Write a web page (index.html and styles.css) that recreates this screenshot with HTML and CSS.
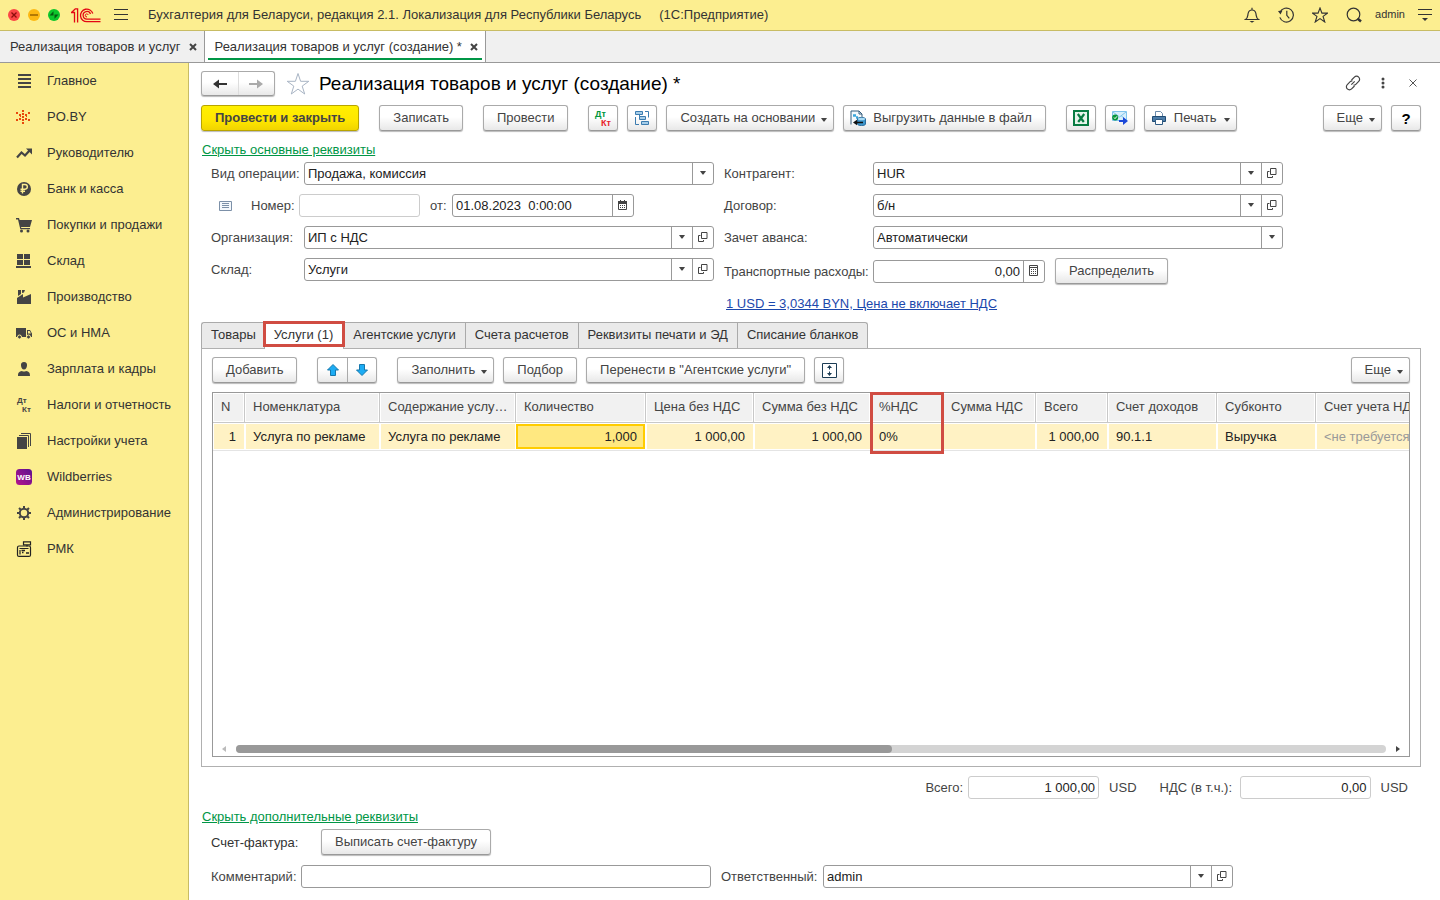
FILE: index.html
```html
<!DOCTYPE html>
<html lang="ru">
<head>
<meta charset="utf-8">
<meta name="viewport" content="width=device-width, initial-scale=1">
<title>Реализация товаров и услуг (создание)</title>
<link rel="stylesheet" href="styles.css">
</head>
<body>
<svg class="sprite" aria-hidden="true">
  <symbol id="caret" viewBox="0 0 6 4"><path d="M0 0h6L3.500 3.500h-1z" fill="#444"/></symbol>
  <symbol id="open" viewBox="0 0 10 10"><path d="M3.500.5h5.500v6h-5.500zM2.500 3.500h-2v6h5v-1.500" fill="none" stroke="#444"/></symbol>
  <symbol id="cross" viewBox="0 0 8 8"><path d="M1 1l6 6M7 1l-6 6" stroke="#444" stroke-width="2"/></symbol>
  <symbol id="star" viewBox="0 0 24 24"><path d="M12 1.500l2.600 7.800h8.200l-6.600 4.800 2.500 7.900-6.700-4.900L5.300 22l2.500-7.900-6.600-4.800h8.200z" fill="none" stroke="currentColor"/></symbol>
</svg>

<header class="titlebar">
  <div class="lights">
    <svg width="12" height="12" viewBox="0 0 12 12"><circle cx="6" cy="6" r="6" fill="#fb4646"/><path d="M3.500 3.500l5 5M8.500 3.500l-5 5" stroke="#8c0d0d" stroke-width="1.300"/></svg>
    <svg width="12" height="12" viewBox="0 0 12 12"><circle cx="6" cy="6" r="6" fill="#fdb813"/><path d="M2 6h8" stroke="#9a6400" stroke-width="1.500"/></svg>
    <svg width="12" height="12" viewBox="0 0 12 12"><circle cx="6" cy="6" r="6" fill="#0cc62c"/><path d="M5.500 2.200v4.300h-4zM6.500 9.800V5.500h4z" fill="#045a10"/></svg>
  </div>
  <svg class="logo" width="30" height="15" viewBox="0 0 30 15" fill="none" stroke="#e30613" stroke-width="1.300"><path d="M0 4.500h3.500V14.500M.8 4.300L4.300.900H6.600V14.500"/><path d="M21.800 5.500A6.300 6.300 0 1 0 16 13.700H29.500"/><path d="M19.500 6A3.800 3.800 0 1 0 16 11.100H29.500"/><path d="M17.200 6.900A1.500 1.500 0 1 0 16 8.900" stroke-width="1"/></svg>
  <button class="plain burger" aria-label="Главное меню"><svg width="14" height="12" viewBox="0 0 14 12"><path d="M0 .5h14M0 5.500h14M0 10.500h14" stroke="#333"/></svg></button>
  <div class="app-name"><span>Бухгалтерия для Беларуси, редакция 2.1. Локализация для Республики Беларусь</span><span>(1С:Предприятие)</span></div>
  <div class="services">
    <button class="plain" aria-label="Уведомления"><svg width="16" height="16" viewBox="0 0 16 16" fill="none" stroke="#333" stroke-width="1.200"><path d="M1.500 12.500c2.500-1.500 2-3 2.600-6C4.600 4 6 3 8 3s3.400 1 3.900 3.500c.6 3 .1 4.500 2.600 6zM8 3V.8"/><path d="M5.500 14h5L8 15.800z" fill="#333" stroke="none"/></svg></button>
    <button class="plain" aria-label="История"><svg width="16" height="16" viewBox="0 0 16 16" fill="none" stroke="#333" stroke-width="1.200"><path d="M2 5.200a7 7 0 1 1-.2 5.200M8.800 3.800v4.500l2.500 3"/><path d="M0 4l4.500-.5L2.500 7.500z" fill="#333" stroke="none"/></svg></button>
    <button class="plain" aria-label="Избранное"><svg width="16" height="16" viewBox="0 0 24 24"><path d="M12 1.500l2.900 7.700h8.200l-6.500 4.900 2.500 8.300-7.100-5-7.100 5 2.500-8.300L.9 9.200h8.200z" fill="none" stroke="#333" stroke-width="1.700"/></svg></button>
    <button class="plain" aria-label="Поиск"><svg width="16" height="16" viewBox="0 0 16 16" fill="none" stroke="#333"><circle cx="7.500" cy="7.500" r="6.300" stroke-width="1.200"/><path d="M11.500 11.500l3.500 3" stroke-width="2.500"/></svg></button>
    <a class="user" href="#">admin</a>
    <button class="plain" aria-label="Настройки"><svg width="14" height="14" viewBox="0 0 14 14"><path d="M0 1.500h14M0 6.500h14" stroke="#333"/><path d="M4 10h6l-3 3z" fill="#333"/></svg></button>
  </div>
</header>

<nav class="windows" aria-label="Открытые окна">
  <div class="window-tab"><a href="#">Реализация товаров и услуг</a><button class="plain" aria-label="Закрыть"><svg width="8" height="8"><use href="#cross"/></svg></button></div>
  <div class="window-tab current"><a href="#">Реализация товаров и услуг (создание) *</a><button class="plain" aria-label="Закрыть"><svg width="8" height="8"><use href="#cross"/></svg></button></div>
</nav>

<div class="workspace">
  <nav class="sections" aria-label="Разделы">
    <a href="#"><svg viewBox="0 0 16 16"><path d="M2 2h13M2 6h13M2 10h13M2 14h13" stroke="#444" stroke-width="2"/></svg>Главное</a>
    <a href="#"><svg viewBox="0 0 16 16" fill="#e8480c"><path d="M0 3h2v2H0zM0 10h2v2H0zM12 3h2v2h-2zM12 10h2v2h-2zM3 5h2v2H3zM3 9h2v2H3zM9 5h2v2H9zM9 9h2v2H9zM6 1h2v2H6zM6 4h2v2H6zM6 7h2v2H6zM6 10h2v2H6zM6 13h2v2H6zM4 7h1v1H4zM10 7h1v1h-1z"/></svg>PO.BY</a>
    <a href="#"><svg viewBox="0 0 16 16"><path d="M1 12.500l4.500-5 3.500 3 5-5.500" fill="none" stroke="#444" stroke-width="2.200"/><path d="M10 3.500h6v6z" fill="#444"/></svg>Руководителю</a>
    <a href="#"><svg viewBox="0 0 16 16"><circle cx="8" cy="8" r="7" fill="#444"/><path d="M6.500 12.500v-9H9a2.300 2.300 0 0 1 0 4.700H4.500M4.500 10.300H9" fill="none" stroke="#fcee90" stroke-width="1.400"/></svg>Банк и касса</a>
    <a href="#"><svg viewBox="0 0 16 16" fill="#444"><path d="M0 1h3l.6 2H16l-2 7H5l.3 1H14v1.200H4.300L2 2.500H0z"/><circle cx="5.500" cy="14" r="1.500"/><circle cx="12" cy="14" r="1.500"/></svg>Покупки и продажи</a>
    <a href="#"><svg viewBox="0 0 16 16" fill="#444"><path d="M1 1h6v5H1zM8 1h6v5H8zM1 7h6v5H1zM8 7h6v5H8zM0 13h15v2H0z"/></svg>Склад</a>
    <a href="#"><svg viewBox="0 0 16 16" fill="#444"><path d="M1 15V9l6-4v3.500L15 5v10zM2 1h3v4L2 7zM6 1h3L8 3.500 6 4z"/></svg>Производство</a>
    <a href="#"><svg viewBox="0 0 16 16"><path d="M0 3h10v9H0zM11 5h3l2 3.500V12h-5z" fill="#444"/><path d="M12 6h1.700l1.200 2.500H12z" fill="#fcee90"/><g fill="#444" stroke="#fcee90"><circle cx="3.500" cy="12" r="2"/><circle cx="12.500" cy="12" r="2"/></g></svg>ОС и НМА</a>
    <a href="#"><svg viewBox="0 0 16 16" fill="#444"><path d="M8 1c2.300 0 3.200 1.500 3 3.500C10.800 6.800 10 8.500 8 8.500S5.200 6.800 5 4.500C4.800 2.500 5.700 1 8 1zM2 15c0-3.500 1-4.300 4-5 1 .8 3 .8 4 0 3 .7 4 1.500 4 5z"/></svg>Зарплата и кадры</a>
    <a href="#"><svg viewBox="0 0 16 16" class="ledger"><text x="1" y="6">Дт</text><text x="6" y="15">Кт</text></svg>Налоги и отчетность</a>
    <a href="#"><svg viewBox="0 0 16 16"><path d="M1 4h10v12H1z" fill="#444"/><path d="M3 2.500h9.500V14M5 .5h9.500V13" fill="none" stroke="#444"/></svg>Настройки учета</a>
    <a href="#"><svg viewBox="0 0 16 16" class="wb"><defs><linearGradient id="wbg" x1="0" y1="1" x2="1" y2="0"><stop offset="0" stop-color="#b5148c"/><stop offset="1" stop-color="#5b1090"/></linearGradient></defs><rect width="16" height="16" rx="3.500" fill="url(#wbg)"/><text x="8" y="11">WB</text></svg>Wildberries</a>
    <a href="#"><svg viewBox="0 0 16 16"><g stroke="#444" fill="none"><circle cx="8" cy="8" r="4.200" stroke-width="2"/><path d="M8 1v2.500M8 12.500V15M1 8h2.500M12.500 8H15M3 3l1.800 1.800M11.200 11.200L13 13M13 3l-1.800 1.800M3 13l1.800-1.800" stroke-width="2"/></g></svg>Администрирование</a>
    <a href="#"><svg viewBox="0 0 16 16" fill="none" stroke="#222" stroke-width="1.200"><rect x="1.500" y="5" width="13" height="10.400" rx="1.500"/><path d="M7.500.8h7v3h-7zM11 4v1.500M3.500 7.500h9M4 9v4.500"/><path d="M5.500 9.500h3.500M6 11.500h1.500M10 12h3" stroke-width="1.500"/></svg>РМК</a>
  </nav>

  <main class="form">
    <div class="heading">
      <div class="pair history">
        <button aria-label="Назад"><svg width="14" height="10" viewBox="0 0 14 10"><path d="M14 5H4" stroke="#333" stroke-width="2"/><path d="M0 5l6-4.500v9z" fill="#333"/></svg></button>
        <button aria-label="Вперед"><svg width="14" height="10" viewBox="0 0 14 10"><path d="M0 5h10" stroke="#aaa" stroke-width="2"/><path d="M14 5L8 .5v9z" fill="#aaa"/></svg></button>
      </div>
      <button class="plain favourite" aria-label="В избранное"><svg width="24" height="24"><use href="#star"/></svg></button>
      <h1>Реализация товаров и услуг (создание) *</h1>
      <div class="window-tools">
        <button class="plain" aria-label="Ссылка"><svg width="16" height="16" viewBox="0 0 16 16" fill="none" stroke="#444" stroke-width="1.200"><path d="M6.500 5L9.400 2.100a3 3 0 0 1 4.300 0 3 3 0 0 1 0 4.300L10.800 9.300a3 3 0 0 1-2.200.9M9.500 11L6.600 13.900a3 3 0 0 1-4.300 0 3 3 0 0 1 0-4.300L5.200 6.700a3 3 0 0 1 2.200-.9M6.300 9.700l3.400-3.400"/></svg></button>
        <button class="plain" aria-label="Меню"><svg width="4" height="12" viewBox="0 0 4 12" fill="#444"><circle cx="2" cy="2" r="1.500"/><circle cx="2" cy="6" r="1.500"/><circle cx="2" cy="10" r="1.500"/></svg></button>
        <button class="plain" aria-label="Закрыть форму"><svg width="8" height="8" viewBox="0 0 8 8"><path d="M.5.5l7 7M7.500.5l-7 7" stroke="#555"/></svg></button>
      </div>
    </div>

    <div class="toolbar main-toolbar">
      <button class="btn primary">Провести и закрыть</button>
      <button class="btn apart">Записать</button>
      <button class="btn apart">Провести</button>
      <button class="btn icon apart" aria-label="Показать проводки"><svg width="18" height="18" viewBox="0 0 18 18" class="entries"><text x="1" y="8" fill="#00963c">Дт</text><text x="7" y="17" fill="#e8202a">Кт</text></svg></button>
      <button class="btn icon" aria-label="Структура подчиненности"><svg width="14" height="14" viewBox="0 0 14 14"><path d="M4.500 4v3H6M7.500 10v2H9M10 .5h3.500v6M.5 6v7.500H4" fill="none" stroke="#3c7cb0"/><g fill="#a6cde8" stroke="#3c7cb0"><path d="M.5.5h7v3h-7zM4.500 5.500h6v3h-6zM6.500 10.500h7v3h-7z"/></g></svg></button>
      <button class="btn menu">Создать на основании<svg width="6" height="4"><use href="#caret"/></svg></button>
      <button class="btn export"><svg width="16" height="16" viewBox="0 0 16 16"><path d="M1 14.500V1h8l3 3v4" fill="#f4f9fc" stroke="#345c7c"/><path d="M9 1v3h3" fill="none" stroke="#345c7c"/><path d="M3 5.500h3M6 7.500h2" stroke="#3aa6dc" stroke-width="2.500"/><path d="M7.500 9c0-2 8-2 8 0v5c0 2-8 2-8 0z" fill="#3c96cc" stroke="#2a6c9c"/><ellipse cx="11.500" cy="9" rx="3.600" ry="1.300" fill="#a8daf4"/><path d="M13 12.500H6" stroke="#111" stroke-width="1.500"/><path d="M3 12.500l4-2.800v5.600z" fill="#111"/></svg>Выгрузить данные в файл</button>
      <button class="btn icon apart" aria-label="Excel"><svg width="16" height="16" viewBox="0 0 16 16"><rect x="1" y="1" width="14" height="14" fill="#e6f4ea" stroke="#087c42" stroke-width="2"/><path d="M4.800 4l6 8M11.200 4l-6 8" stroke="#087c42" stroke-width="2.200"/></svg></button>
      <button class="btn icon" aria-label="Отправить по почте"><svg width="16" height="14" viewBox="0 0 16 14"><path d="M.5.500h14v9H.5z" fill="#d7effc" stroke="#80c4ec"/><path d="M1 1l6.500 5L14 1M1 9l5-4.500M14 9L9 4.500" fill="none" stroke="#80c4ec"/><circle cx="3.200" cy="6.500" r="3" fill="#08963c"/><path d="M2 6.500l1 1.200L5 5.300" fill="none" stroke="#fff"/><path d="M7 10h5" stroke="#1c48d8" stroke-width="2"/><path d="M16 10l-5-4v8z" fill="#1c48d8"/></svg></button>
      <button class="btn menu print"><svg width="14" height="14" viewBox="0 0 14 14"><path d="M3.500 6V.5h5l2 2V6" fill="#fff" stroke="#6c8cac"/><path d="M.5 5.500h13v5H.5z" fill="#4c7ca8" stroke="#204c74"/><path d="M3.500 8.500h7v5h-7z" fill="#fff" stroke="#305c84"/></svg>Печать<svg width="6" height="4"><use href="#caret"/></svg></button>
      <button class="btn menu push">Еще<svg width="6" height="4"><use href="#caret"/></svg></button>
      <button class="btn icon help">?</button>
    </div>

    <a class="toggle" href="#">Скрыть основные реквизиты</a>

    <div class="details">
      <div class="stack left">
        <div class="row"><label for="kind">Вид операции:</label><div class="field"><select id="kind"><option>Продажа, комиссия</option></select><span class="cell"><svg width="6" height="4"><use href="#caret"/></svg></span></div></div>
        <div class="row number-row">
          <svg class="list-icon" width="13" height="10" viewBox="0 0 13 10"><path d="M.5.500h12v9H.5z" fill="#f4f8fc" stroke="#7c90a8"/><path d="M3 2.500h7M3 4.500h7M3 6.500h7" stroke="#7c90a8"/></svg>
          <label class="num-label" for="num">Номер:</label><div class="field quiet num"><input id="num" type="text"></div>
          <label class="date-label" for="date">от:</label><div class="field date"><input id="date" type="text" value="01.08.2023  0:00:00"><button aria-label="Календарь"><svg width="9" height="10" viewBox="0 0 9 10"><path d="M.5 1.500h8v8h-8z" fill="none" stroke="#444"/><path d="M0 1h9v3H0zM2 0h1v1H2zM6 0h1v1H6z" fill="#444"/><path d="M2 5.500h5M2 7.500h5" stroke="#444" stroke-dasharray="1 1"/></svg></button></div>
        </div>
        <div class="row"><label for="org">Организация:</label><div class="field"><input id="org" type="text" value="ИП с НДС"><button aria-label="Выбрать"><svg width="6" height="4"><use href="#caret"/></svg></button><button aria-label="Открыть"><svg width="10" height="10"><use href="#open"/></svg></button></div></div>
        <div class="row"><label for="store">Склад:</label><div class="field"><input id="store" type="text" value="Услуги"><button aria-label="Выбрать"><svg width="6" height="4"><use href="#caret"/></svg></button><button aria-label="Открыть"><svg width="10" height="10"><use href="#open"/></svg></button></div></div>
      </div>
      <div class="stack right">
        <div class="row"><label for="partner">Контрагент:</label><div class="field"><input id="partner" type="text" value="HUR"><button aria-label="Выбрать"><svg width="6" height="4"><use href="#caret"/></svg></button><button aria-label="Открыть"><svg width="10" height="10"><use href="#open"/></svg></button></div></div>
        <div class="row"><label for="contract">Договор:</label><div class="field"><input id="contract" type="text" value="б/н"><button aria-label="Выбрать"><svg width="6" height="4"><use href="#caret"/></svg></button><button aria-label="Открыть"><svg width="10" height="10"><use href="#open"/></svg></button></div></div>
        <div class="row"><label for="advance">Зачет аванса:</label><div class="field"><select id="advance"><option>Автоматически</option></select><span class="cell"><svg width="6" height="4"><use href="#caret"/></svg></span></div></div>
        <div class="row costs"><label for="costs">Транспортные расходы:</label><div class="field amount"><input id="costs" type="text" value="0,00"><button aria-label="Калькулятор"><svg width="9" height="11" viewBox="0 0 9 11"><path d="M.5.500h8v10h-8zM1 2.500h7" fill="none" stroke="#444"/><path d="M2 4.500h5M2 6.500h5M2 8.500h5" stroke="#444" stroke-dasharray="1 1"/></svg></button></div><button class="btn">Распределить</button></div>
        <a class="rate" href="#">1 USD = 3,0344 BYN, Цена не включает НДС</a>
      </div>
    </div>

    <div class="tabs" role="tablist">
      <button role="tab">Товары</button><button role="tab" aria-selected="true">Услуги (1)</button><button role="tab">Агентские услуги</button><button role="tab">Счета расчетов</button><button role="tab">Реквизиты печати и ЭД</button><button role="tab">Списание бланков</button>
    </div>
    <section class="panel">
      <div class="toolbar">
        <button class="btn">Добавить</button>
        <div class="pair apart">
          <button aria-label="Вверх"><svg width="12" height="12" viewBox="0 0 12 12"><path d="M6 .5L11.500 6H8.500v5.500h-5V6H.5z" fill="#1cacf4" stroke="#1678ac"/></svg></button>
          <button aria-label="Вниз"><svg width="12" height="12" viewBox="0 0 12 12"><path d="M6 11.500L11.500 6H8.500V.500h-5V6H.5z" fill="#1cacf4" stroke="#1678ac"/></svg></button>
        </div>
        <button class="btn menu apart">Заполнить<svg width="6" height="4"><use href="#caret"/></svg></button>
        <button class="btn">Подбор</button>
        <button class="btn">Перенести в "Агентские услуги"</button>
        <button class="btn icon" aria-label="Изменить высоту"><svg width="15" height="15" viewBox="0 0 15 15"><path d="M.5.500h14v14H.5z" fill="#fff" stroke="#1c3c54"/><path d="M7.500 3v3.500M7.500 8.500V12" stroke="#1c3c54"/><path d="M5 5l2.500-3L10 5zM5 10l2.500 3 2.500-3z" fill="#1c3c54"/></svg></button>
        <button class="btn menu push">Еще<svg width="6" height="4"><use href="#caret"/></svg></button>
      </div>
      <div class="grid-frame">
        <div class="grid-clip">
          <table>
            <colgroup><col class="w-n"><col class="w-item"><col class="w-text"><col class="w-qty"><col class="w-price"><col class="w-sum"><col class="w-rate"><col class="w-tax"><col class="w-total"><col class="w-account"><col class="w-sub"><col class="w-last"></colgroup>
            <thead><tr><th>N</th><th>Номенклатура</th><th>Содержание услу…</th><th>Количество</th><th>Цена без НДС</th><th>Сумма без НДС</th><th>%НДС</th><th>Сумма НДС</th><th>Всего</th><th>Счет доходов</th><th>Субконто</th><th>Счет учета НДС</th></tr></thead>
            <tbody><tr><td class="r">1</td><td>Услуга по рекламе</td><td>Услуга по рекламе</td><td class="r active">1,000</td><td class="r">1 000,00</td><td class="r">1 000,00</td><td>0%</td><td></td><td class="r">1 000,00</td><td>90.1.1</td><td>Выручка</td><td class="muted">&lt;не требуется&gt;</td></tr></tbody>
          </table>
        </div>
        <div class="mark"></div>
        <div class="scroll">
          <svg width="4" height="6" viewBox="0 0 4 6"><path d="M4 0v6L0 3z" fill="#bbb"/></svg>
          <div class="track"><div class="thumb"></div></div>
          <svg width="4" height="6" viewBox="0 0 4 6"><path d="M0 0v6l4-3z" fill="#444"/></svg>
        </div>
      </div>
    </section>

    <div class="totals">
      <label for="total">Всего:</label><div class="field quiet sum"><input id="total" type="text" value="1 000,00" readonly></div><span class="currency">USD</span>
      <label class="tax-label" for="tax">НДС (в т.ч.):</label><div class="field quiet sum"><input id="tax" type="text" value="0,00" readonly></div><span class="currency">USD</span>
    </div>

    <a class="toggle more" href="#">Скрыть дополнительные реквизиты</a>
    <div class="invoice"><span>Счет-фактура:</span><button class="btn">Выписать счет-фактуру</button></div>
    <div class="footer">
      <div class="row comment"><label for="comment">Комментарий:</label><div class="field"><input id="comment" type="text"></div></div>
      <div class="row owner"><label for="owner">Ответственный:</label><div class="field"><input id="owner" type="text" value="admin"><button aria-label="Выбрать"><svg width="6" height="4"><use href="#caret"/></svg></button><button aria-label="Открыть"><svg width="10" height="10"><use href="#open"/></svg></button></div></div>
    </div>
  </main>
</div>
</body>
</html>
```
FILE: styles.css
```css
* { box-sizing: border-box; }
body {
  margin: 0;
  min-height: 100vh;
  display: flex;
  flex-direction: column;
  background: #fff;
  color: #333;
  font: 13px/15px "Liberation Sans", Arial, sans-serif;
}
button, input, select { font: inherit; color: inherit; margin: 0; }
a { color: inherit; text-decoration: none; }
svg { display: block; flex: none; }
.sprite { position: absolute; width: 0; height: 0; }
.plain { display: flex; padding: 0; border: 0; background: none; }

/* Title bar */
.titlebar {
  display: flex;
  align-items: center;
  height: 31px;
  padding: 0 8px;
  background: #fcee90;
  border-bottom: 1px solid #c8bc64;
}
.lights { display: flex; gap: 8px; }
.logo { margin-left: 11px; }
.burger { margin-left: 13px; }
.app-name { display: flex; gap: 18px; margin-left: 20px; padding-bottom: 1px; white-space: nowrap; }
.services { display: flex; align-items: center; gap: 18px; margin-left: auto; }
.user { font-size: 11px; margin: 0 -5px; padding-bottom: 2px; }

/* Window tabs */
.windows {
  display: flex;
  height: 32px;
  background: #f0f0f0;
  border-bottom: 1px solid #999;
}
.window-tab {
  display: flex;
  align-items: center;
  gap: 8px;
  padding: 0 7px 0 10px;
  border-right: 1px solid #999;
  white-space: nowrap;
}
.window-tab.current {
  position: relative;
  background: #fff;
}
.window-tab.current::after {
  content: "";
  position: absolute;
  left: 3px;
  right: 3px;
  bottom: 2px;
  height: 2px;
  background: #009646;
}

/* Sections */
.workspace { display: flex; flex: 1; }
.sections {
  flex: none;
  width: 189px;
  background: #fcee90;
  border-right: 1px solid #c8bc64;
}
.sections a {
  display: flex;
  align-items: center;
  gap: 15px;
  height: 36px;
  padding: 0 0 1px 16px;
}
.sections svg { width: 16px; height: 16px; }
.ledger text { font: bold 8px "Liberation Sans", sans-serif; fill: #444; }
.wb text { font: bold 8px "Liberation Sans", sans-serif; fill: #fff; text-anchor: middle; }
.entries text { font: bold 9px "Liberation Sans", sans-serif; }

/* Form */
.form {
  flex: 1;
  min-width: 0;
  display: flex;
  flex-direction: column;
  padding: 8px 19px 12px 12px;
  color: #444;
}
.heading { display: flex; align-items: center; height: 25px; }
.heading h1 {
  margin: 0 0 0 9px;
  color: #000;
  font-size: 19px;
  font-weight: 400;
  line-height: 24px;
  white-space: nowrap;
}
.favourite { margin-left: 11px; color: #a8b4c4; }
.window-tools { display: flex; align-items: center; gap: 20px; margin: 0 4px 0 auto; padding-bottom: 2px; }
.window-tools .plain:last-child { margin-left: 4px; }

.btn, .pair {
  height: 26px;
  border: 1px solid #aaa;
  border-bottom-color: #999;
  border-radius: 3px;
  background: linear-gradient(#fff 45%, #e8e8e8);
  box-shadow: 0 1px 1px #bbb;
  color: #444;
}
.btn {
  display: flex;
  flex: none;
  align-items: center;
  justify-content: center;
  padding: 0 13px 1px;
  white-space: nowrap;
}
.btn.icon { width: 30px; padding: 0; }
.btn.primary {
  background: linear-gradient(#fff000, #ffe600 60%, #f0d400);
  border-color: #b8a400;
  font-weight: 700;
}
.btn.menu { gap: 6px; padding-right: 6px; }
.btn.menu svg:last-child { margin-top: 4px; }
.btn.export { gap: 7px; padding-left: 6px; }
.btn.print { padding-left: 7px; gap: 8px; }
.btn.help { color: #000; font-size: 15px; font-weight: 700; }
.pair { display: flex; width: 60px; }
.pair button {
  flex: 1;
  display: flex;
  align-items: center;
  justify-content: center;
  padding: 0;
  border: 0;
  background: none;
}
.pair button + button { border-left: 1px solid #aaa; }
.pair.history { width: 74px; height: 25px; }
.pair.history button + button { border-left-color: #ddd; }

.toolbar { display: flex; gap: 9px; }
.toolbar .apart { margin-left: 11px; }
.toolbar .push { margin-left: auto; }
.main-toolbar { margin-top: 9px; }

.toggle {
  align-self: flex-start;
  margin: 11px 0 5px 1px;
  color: #009646;
  text-decoration: underline;
}

/* Fields */
.details { display: flex; gap: 10px; padding-left: 10px; }
.stack { display: flex; flex-direction: column; gap: 9px; }
.left { flex: 0 1 503px; }
.right { flex: 0 1 559px; }
.row { display: flex; align-items: center; height: 23px; }
.row > label { flex: none; white-space: nowrap; }
.left .row > label { width: 93px; }
.right .row > label { width: 149px; }
.field {
  display: flex;
  flex: 1;
  min-width: 0;
  height: 23px;
  border: 1px solid #999;
  border-radius: 3px;
  background: #fff;
  color: #222;
}
.field.quiet { border-color: #ccc; }
.field input, .field select {
  flex: 1;
  min-width: 0;
  width: 100%;
  padding: 0 3px;
  border: 0;
  border-radius: 3px;
  background: none;
  outline: 0;
  appearance: none;
}
.field button, .cell {
  display: flex;
  flex: none;
  align-items: center;
  justify-content: center;
  width: 21px;
  padding: 0 1px 2px 0;
  border: 0;
  border-left: 1px solid #999;
  background: none;
}
.list-icon { margin: 0 19px 0 8px; }
.left .row > .num-label { width: 48px; }
.left .row > .date-label { width: 22px; margin-left: 10px; }
.field.num { flex: 0 1 121px; }
.field.date { flex: 0 1 182px; }
.row.costs { height: 26px; }
.field.amount { flex: 0 1 172px; margin-right: 10px; }
.amount input, .sum input { text-align: right; }
.rate {
  align-self: flex-start;
  margin: 3px 0 0 2px;
  color: #1c48ac;
  text-decoration: underline;
}

/* Tabs */
.tabs { display: flex; margin-top: 11px; }
.tabs button {
  height: 26px;
  padding: 0 9px 2px;
  border: 1px solid #aaa;
  border-width: 1px 0 0 1px;
  background: #eaeaea;
  color: #333;
  white-space: nowrap;
}
.tabs button:first-child { padding-right: 8px; border-top-left-radius: 3px; }
.tabs button:last-child { border-right-width: 1px; border-top-right-radius: 3px; }
.tabs [aria-selected] {
  position: relative;
  height: 27px;
  margin-bottom: -1px;
  padding-right: 10px;
  padding-bottom: 3px;
  background: #fff;
}
.tabs [aria-selected]::after {
  content: "";
  position: absolute;
  inset: -2px -2px 2px;
  border: 3px solid #d04c42;
}
.panel {
  flex: 1;
  display: flex;
  flex-direction: column;
  gap: 9px;
  padding: 8px 10px 9px;
  border: 1px solid #b0b0b0;
}

/* Goods table */
.grid-frame {
  position: relative;
  flex: 1;
  display: flex;
  flex-direction: column;
  justify-content: space-between;
  border: 1px solid #999;
}
.grid-clip { overflow: hidden; width: 100%; contain: inline-size; }
table { table-layout: fixed; width: 1223px; border-collapse: separate; border-spacing: 0; }
.w-n { width: 32px; }
.w-item { width: 135px; }
.w-text { width: 136px; }
.w-qty { width: 130px; }
.w-price { width: 108px; }
.w-sum { width: 117px; }
.w-rate { width: 72px; }
.w-tax { width: 93px; }
.w-total { width: 72px; }
.w-account { width: 109px; }
.w-sub { width: 99px; }
.w-last { width: 120px; }
th, td {
  padding: 0 6px 0 8px;
  text-align: left;
  white-space: nowrap;
  font-weight: 400;
  box-shadow: inset 0 0 0 1px #fff;
}
th {
  height: 30px;
  padding-bottom: 2px;
  background: #f1f1f1;
  border-right: 1px solid #c8c8c8;
  border-bottom: 1px solid #c8c8c8;
}
td {
  height: 28px;
  background: #fff2c4;
  border-bottom: 1px solid #e4e4e4;
  color: #222;
}
.r { text-align: right; padding-right: 9px; }
.active {
  background: #ffe880;
  box-shadow: inset 0 1px #fff, inset 0 -1px #fff, inset -1px 0 #fff,
    inset 2px 0 #fc0, inset 0 3px #fc0, inset 0 -3px #fc0, inset -3px 0 #fc0;
}
.muted { color: #999; }
.mark {
  position: absolute;
  left: 657px;
  top: -1px;
  width: 74px;
  height: 62px;
  border: 3px solid #d04c42;
}
.scroll { display: flex; align-items: center; gap: 10px; height: 14px; padding: 0 9px; }
.track { flex: 1; height: 8px; border-radius: 4px; background: #d4d4d4; }
.thumb { width: 57%; height: 8px; border-radius: 4px; background: #999; }

/* Bottom part */
.totals {
  display: flex;
  align-items: center;
  justify-content: flex-end;
  margin-top: 9px;
  padding-right: 13px;
}
.field.sum { flex: 0 0 131px; margin: 0 10px 0 5px; }
.tax-label { width: 75px; margin-left: 23px; }
.toggle.more { margin-top: 10px; }
.invoice { display: flex; align-items: center; padding-left: 10px; color: #333; }
.invoice span { width: 110px; }
.footer { display: flex; gap: 10px; margin-top: 10px; padding-left: 10px; }
.comment { flex: 0 1 500px; }
.comment > label { width: 90px; }
.owner { flex: 0 1 512px; }
.owner > label { width: 102px; }
```
